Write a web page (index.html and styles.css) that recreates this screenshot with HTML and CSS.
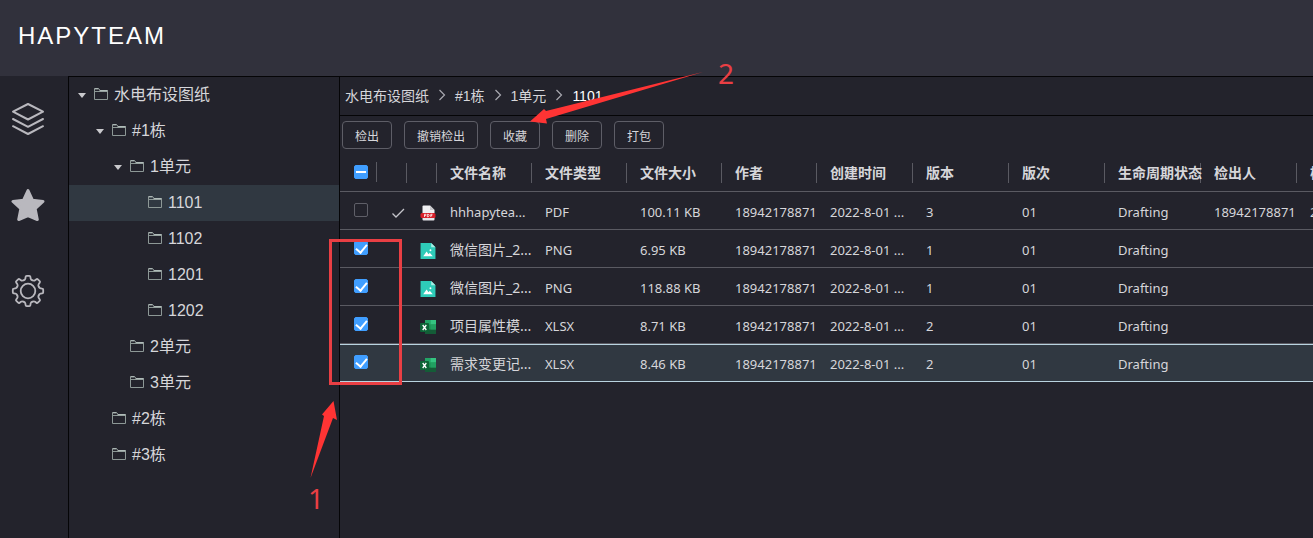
FILE: index.html
```html
<!DOCTYPE html>
<html lang="zh-CN">
<head>
<meta charset="utf-8">
<title>HAPYTEAM</title>
<link rel="stylesheet" href="styles.css">
</head>
<body>
<svg class="symbols" aria-hidden="true">
  <symbol id="folder" viewBox="0 0 14 12"><path d="M.5 11.5V.8h4.3l1.400 1.700h7.300v9zM.5 3.500h13" fill="none" stroke="#8d9896"/><path d="M5.500 2.700h8M.5.7h4" stroke="#b9c4c2"/></symbol>
  <symbol id="caret" viewBox="0 0 8 5"><path d="M0 0h8L4 5z" fill="#c9c9cd"/></symbol>
  <symbol id="pdf" viewBox="0 0 16 16"><path d="M2.500 1.500q0-1 1-1H10l4.500 4.500V8h-12z" fill="#f0f0f2"/><path d="M10 .5 14.500 5H10z" fill="#c8c8cc"/><path d="M2.500 12h12v2.500q0 1-1 1h-10q-1 0-1-1z" fill="#e6e6ea"/><rect x=".5" y="8" width="15" height="5" rx="1.500" fill="#d9202a"/><path d="M4.500 12V9.300h1.200q.8.700-.1 1.300H4.500M7.300 11.800V9.300q2.100-.1 1.800 1.300-.2 1.300-1.800 1.200M10.800 12V9.300h1.700M10.800 10.600h1.400" fill="none" stroke="#fff" stroke-width=".8"/></symbol>
  <symbol id="image" viewBox="0 0 14 15"><path d="M0 0h10l4 4v11H0z" fill="#2ecbb8"/><path d="M10 0v4h4z" fill="#a9eee5"/><path d="M2.500 12.500 5.700 8l1.800 2.500 1.200-1.400 2.800 3.400z" fill="#fff"/><circle cx="9.300" cy="6.800" r=".9" fill="#fff"/></symbol>
  <symbol id="excel" viewBox="0 0 16 14"><path d="M5 0h11v14H5z" fill="#1b8f52"/><path d="M5 0h5.500v4.500H5z" fill="#23a566"/><path d="M10.500 0H16v4.500h-5.500z" fill="#35c481"/><path d="M5 9.500h11V14H5z" fill="#145c37"/><path d="M10.500 4.500H16v5h-5.500z" fill="#21a061"/><rect y="3" width="9" height="9" rx="1" fill="#0d6436"/><path d="m2.700 5 3.600 5M6.300 5 2.700 10" stroke="#fff" stroke-width="1.300"/></symbol>
  <symbol id="tick" viewBox="0 0 14 10"><path d="m1.500 5.500 3.500 3.500L13 1" fill="none" stroke="#c4c4ca" stroke-width="1.300"/></symbol>
  <symbol id="arrow" viewBox="0 0 8 12"><path d="m1.500 1 5 5-5 5" fill="none" stroke="#a9a9b0" stroke-width="1.200"/></symbol>
</svg>

<header class="topbar"><span class="brand">HAPYTEAM</span></header>

<div class="workspace">
  <nav class="rail">
    <button class="rail-button" aria-label="图层">
      <svg viewBox="0 0 34 34" fill="none" stroke="#b9b8be" stroke-width="2" stroke-linejoin="round" stroke-linecap="round"><path d="M17 2 32 9.700 17 17.500 2 9.700zM2 17l15 7.800L32 17M2 24.200 17 32l15-7.800"/></svg>
    </button>
    <button class="rail-button" aria-label="收藏夹">
      <svg viewBox="0 0 34 34"><path d="m17 2.500 4.400 9.700 10.600 1.200-7.900 7.200 2.200 10.900L17 27.500l-9.300 4 2.200-10.900L2 13.400l10.600-1.200z" fill="#b9b8be" stroke="#b9b8be" stroke-width="3" stroke-linejoin="round"/></svg>
    </button>
    <button class="rail-button" aria-label="设置">
      <svg viewBox="-17 -17 34 34" fill="none" stroke="#b9b8be" stroke-width="1.800" stroke-linecap="round">
        <path id="tooth" d="M-4.400-10.700Q-2.800-11.200-2.600-12.600L-2.400-14.200Q-2.300-15.200-1.300-15.200H1.300Q2.300-15.200 2.400-14.200L2.600-12.600Q2.800-11.200 4.400-10.700"/>
        <use href="#tooth" transform="rotate(45)"/><use href="#tooth" transform="rotate(90)"/><use href="#tooth" transform="rotate(135)"/><use href="#tooth" transform="rotate(180)"/><use href="#tooth" transform="rotate(225)"/><use href="#tooth" transform="rotate(270)"/><use href="#tooth" transform="rotate(315)"/>
        <circle r="7.300"/>
      </svg>
    </button>
  </nav>

  <aside class="tree">
    <button class="node"><svg class="caret"><use href="#caret"/></svg><svg class="folder"><use href="#folder"/></svg>水电布设图纸</button>
    <button class="node level-1"><svg class="caret"><use href="#caret"/></svg><svg class="folder"><use href="#folder"/></svg>#1栋</button>
    <button class="node level-2"><svg class="caret"><use href="#caret"/></svg><svg class="folder"><use href="#folder"/></svg>1单元</button>
    <button class="node level-3 is-current"><span class="caret"></span><svg class="folder"><use href="#folder"/></svg>1101</button>
    <button class="node level-3"><span class="caret"></span><svg class="folder"><use href="#folder"/></svg>1102</button>
    <button class="node level-3"><span class="caret"></span><svg class="folder"><use href="#folder"/></svg>1201</button>
    <button class="node level-3"><span class="caret"></span><svg class="folder"><use href="#folder"/></svg>1202</button>
    <button class="node level-2"><span class="caret"></span><svg class="folder"><use href="#folder"/></svg>2单元</button>
    <button class="node level-2"><span class="caret"></span><svg class="folder"><use href="#folder"/></svg>3单元</button>
    <button class="node level-1"><span class="caret"></span><svg class="folder"><use href="#folder"/></svg>#2栋</button>
    <button class="node level-1"><span class="caret"></span><svg class="folder"><use href="#folder"/></svg>#3栋</button>
  </aside>

  <main class="content">
    <nav class="crumbs">
      <a href="#">水电布设图纸</a><svg class="arrow"><use href="#arrow"/></svg>
      <a href="#">#1栋</a><svg class="arrow"><use href="#arrow"/></svg>
      <a href="#">1单元</a><svg class="arrow"><use href="#arrow"/></svg>
      <a href="#" class="is-here">1101</a>
    </nav>
    <div class="toolbar">
      <button class="action">检出</button>
      <button class="action">撤销检出</button>
      <button class="action">收藏</button>
      <button class="action">删除</button>
      <button class="action">打包</button>
    </div>
    <table class="files">
      <colgroup><col class="c-check"><col class="c-icon"><col class="c-icon"><col class="c-text"><col class="c-text"><col class="c-text"><col class="c-text"><col class="c-wide"><col class="c-wide"><col class="c-wide"><col class="c-wide"><col class="c-wide"><col class="c-wide"></colgroup>
      <thead>
        <tr>
          <th class="check"><div class="head"><input type="checkbox" class="box is-mixed" aria-label="全选"></div></th>
          <th><div class="head"></div></th><th><div class="head"></div></th>
          <th><div class="head">文件名称</div></th><th><div class="head">文件类型</div></th><th><div class="head">文件大小</div></th><th><div class="head">作者</div></th><th><div class="head">创建时间</div></th><th><div class="head">版本</div></th><th><div class="head">版次</div></th><th><div class="head">生命周期状态</div></th><th><div class="head">检出人</div></th><th><div class="head">检出时间</div></th>
        </tr>
      </thead>
      <tbody>
        <tr><td class="check"><input type="checkbox" class="box" aria-label="选择文件"></td><td class="icon"><svg class="tick"><use href="#tick"/></svg></td><td class="icon"><svg class="file"><use href="#pdf"/></svg></td><td>hhhapytea...</td><td>PDF</td><td>100.11 KB</td><td>18942178871</td><td>2022-8-01 ...</td><td>3</td><td>01</td><td>Drafting</td><td>18942178871</td><td>2022-8-01 ...</td></tr>
        <tr><td class="check"><input type="checkbox" class="box" checked aria-label="选择文件"></td><td></td><td class="icon"><svg class="file"><use href="#image"/></svg></td><td class="name">微信图片_2...</td><td>PNG</td><td>6.95 KB</td><td>18942178871</td><td>2022-8-01 ...</td><td>1</td><td>01</td><td>Drafting</td><td></td><td></td></tr>
        <tr><td class="check"><input type="checkbox" class="box" checked aria-label="选择文件"></td><td></td><td class="icon"><svg class="file"><use href="#image"/></svg></td><td class="name">微信图片_2...</td><td>PNG</td><td>118.88 KB</td><td>18942178871</td><td>2022-8-01 ...</td><td>1</td><td>01</td><td>Drafting</td><td></td><td></td></tr>
        <tr><td class="check"><input type="checkbox" class="box" checked aria-label="选择文件"></td><td></td><td class="icon"><svg class="file"><use href="#excel"/></svg></td><td class="name">项目属性模...</td><td>XLSX</td><td>8.71 KB</td><td>18942178871</td><td>2022-8-01 ...</td><td>2</td><td>01</td><td>Drafting</td><td></td><td></td></tr>
        <tr class="is-current"><td class="check"><input type="checkbox" class="box" checked aria-label="选择文件"></td><td></td><td class="icon"><svg class="file"><use href="#excel"/></svg></td><td class="name">需求变更记...</td><td>XLSX</td><td>8.46 KB</td><td>18942178871</td><td>2022-8-01 ...</td><td>2</td><td>01</td><td>Drafting</td><td></td><td></td></tr>
      </tbody>
    </table>
  </main>
</div>

<svg class="notes" width="740" height="520">
  <rect x="330.500" y="240.500" width="70" height="143" fill="none" stroke="#e93f44" stroke-width="3"/>
  <path d="M703 72 546 111 544 109 530 121.500 547 123.500 546 119z" fill="#ff3434"/>
  <path d="M310.500 478 324 416 322 414.500 333.500 401 337 420 333 418z" fill="#ff3434"/>
  <text x="718" y="84">2</text>
  <text x="308" y="509">1</text>
</svg>
</body>
</html>
```
FILE: styles.css
```css
* { box-sizing: border-box; }

body {
  margin: 0;
  min-height: 100vh;
  display: flex;
  flex-direction: column;
  position: relative;
  overflow: hidden;
  background: #23232c;
  color: #d6d6da;
  font-family: "Liberation Sans", "Noto Sans CJK SC", sans-serif;
}

button {
  margin: 0;
  border: 0;
  background: none;
  color: inherit;
  font-family: inherit;
}

.symbols { position: absolute; width: 0; height: 0; }

.topbar {
  display: flex;
  align-items: center;
  height: 76px;
  padding: 0 18px 4px;
  background: #31313c;
}

.brand {
  color: #fff;
  font-size: 24px;
  letter-spacing: 2px;
}

.workspace { flex: 1; display: flex; }

.rail {
  width: 68px;
  flex: none;
  display: flex;
  flex-direction: column;
  gap: 52px;
  padding: 26px 11px;
}

.rail-button { width: 34px; height: 34px; padding: 0; }
.rail-button svg { display: block; width: 34px; height: 34px; }

.tree {
  width: 272px;
  flex: none;
  border: solid #050507;
  border-width: 1px 1px 0;
}

.node {
  display: flex;
  align-items: center;
  width: 100%;
  height: 36px;
  padding: 0 0 0 9px;
  font-size: 16px;
  line-height: 20px;
  text-align: left;
}

.level-1 { padding-left: 27px; }
.level-2 { padding-left: 45px; }
.level-3 { padding-left: 63px; }
.node.is-current { background: #303841; }

.caret { width: 8px; height: 5px; margin-right: 8px; flex: none; }
.folder { width: 14px; height: 12px; margin: 0 6px 2px 0; flex: none; }

.content { flex: 1; min-width: 0; overflow: hidden; border-top: 1px solid #050507; }

.crumbs {
  display: flex;
  align-items: center;
  height: 39px;
  padding: 0 5px;
  border-bottom: 1px solid #050507;
  font-size: 14px;
  line-height: 20px;
}

.crumbs a { color: inherit; text-decoration: none; white-space: nowrap; }
.crumbs .is-here { color: #fff; }
.arrow { width: 8px; height: 12px; margin: 0 9px 3px; flex: none; }

.toolbar { display: flex; gap: 12px; padding: 5px 2px; }

.action {
  height: 28px;
  padding: 0 12px;
  border: 1px solid #5e5e67;
  border-radius: 4px;
  font-size: 12px;
}

.files {
  width: 1053px;
  table-layout: fixed;
  border-spacing: 0;
  font-family: "Noto Sans", "Noto Sans CJK SC", sans-serif;
  font-size: 13px;
}

.c-check { width: 37px; }
.c-icon { width: 30px; }
.c-text { width: 95px; }
.c-wide { width: 96px; }

.files th, .files td {
  height: 38px;
  padding: 0;
  border-bottom: 1px solid #5a5a62;
  text-align: left;
  white-space: nowrap;
}

.files td { padding: 2px 0 0 13px; line-height: 20px; }
.files .check { padding: 0 0 2px 14px; }
.files .icon { padding: 4px 0 0 13px; }
.files .name { font-size: 14px; }

.files .is-current td {
  background: #303841;
  border-top: 1px solid #b9d3e0;
  border-bottom-color: #b9d3e0;
}

.head {
  display: flex;
  align-items: center;
  height: 20px;
  padding-left: 13px;
  border-right: 1px solid #5a5a62;
  font-size: 14px;
  font-weight: 700;
  line-height: 18px;
}

.check .head { padding-left: 0; }

.box {
  appearance: none;
  display: grid;
  place-items: center;
  width: 14px;
  height: 14px;
  margin: 0;
  border: 1px solid #5f5f68;
  border-radius: 2px;
}

.box:checked, .box.is-mixed { background: #409eff; border-color: #409eff; }

.box:checked::after {
  content: "";
  width: 5px;
  height: 9px;
  margin-bottom: 3px;
  border: solid #fff;
  border-width: 0 2px 2px 0;
  transform: rotate(40deg);
}

.box.is-mixed::after { content: ""; width: 10px; height: 2px; background: #fff; }

.tick { display: block; width: 14px; height: 10px; margin-left: 1px; }
.file { display: block; width: 16px; height: 16px; }

.notes { position: absolute; top: 0; left: 0; pointer-events: none; }
.notes text { fill: #e93f44; font-family: "Noto Sans", sans-serif; font-size: 28px; }
```
